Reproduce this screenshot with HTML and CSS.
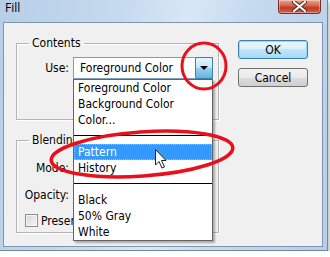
FILE: index.html
```html
<!DOCTYPE html>
<html lang="en">

<head>
  <meta charset="UTF-8">
  <title>Fill</title>
  <link rel="stylesheet" href="styles.css">
</head>

<body>

  <div class="window">

    <!-- Title bar -->
    <div class="titlebar">
      <span class="title">Fill</span>
      <div class="close">
        <svg width="15" height="11" viewBox="0 0 15 11">
          <path d="M2 1 L13 10 M13 1 L2 10" stroke="#4a2a24" stroke-width="4" stroke-linecap="round" />
          <path d="M2 1 L13 10 M13 1 L2 10" stroke="#fff" stroke-width="2.2" stroke-linecap="round" />
        </svg>
      </div>
    </div>

    <!-- Dialog body -->
    <div class="client">
      <div class="left">
        <fieldset class="group">
          <legend>Contents</legend>
          <div class="group-body contents-body">
            <div class="row">
              <label class="row-label">Use:</label>
              <div class="select">
                <span class="select-text">Foreground Color</span>
                <span class="select-btn"><span class="arrow"></span></span>
              </div>
            </div>
          </div>
        </fieldset>

        <fieldset class="group blending">
          <legend><span class="clip legend-clip">Blending</span></legend>
          <div class="group-body blending-body">
            <div class="row">
              <label class="row-label">Mode:</label>
              <div class="select small"></div>
            </div>
            <div class="row opacity-row">
              <label class="row-label">Opacity:</label>
              <div class="select tiny"></div>
            </div>
            <div class="check-row">
              <span class="checkbox"></span>
              <span class="clip check-clip">Preserve Transparency</span>
            </div>
          </div>
        </fieldset>
      </div>

      <div class="buttons">
        <button class="btn btn-default">OK</button>
        <button class="btn">Cancel</button>
      </div>
    </div>

    <!-- Open dropdown list -->
    <ul class="dropdown">
      <li>Foreground Color</li>
      <li>Background Color</li>
      <li>Color...</li>
      <li class="sep"></li>
      <li class="selected">Pattern</li>
      <li>History</li>
      <li class="sep"></li>
      <li>Black</li>
      <li>50% Gray</li>
      <li>White</li>
    </ul>

    <!-- Red annotations and mouse pointer -->
    <svg class="overlay" width="330" height="257" viewBox="0 0 330 257">
      <ellipse cx="204" cy="66" rx="22" ry="23" fill="none" stroke="#e8101c" stroke-width="3" />
      <ellipse cx="142" cy="154" rx="91" ry="22" fill="none" stroke="#e8101c" stroke-width="3.5"
        transform="rotate(-4 142 154)" />
      <path d="M155.5 149.5 L155.5 165 L159 161.5 L162 168 L164.5 167 L161.5 160.5 L166 160.5 Z"
        fill="#fff" stroke="#222" stroke-width="1" stroke-linejoin="round" />
    </svg>

  </div>

</body>

</html>
```

FILE: styles.css
```css
/* Basic Reset */
* {
  margin: 0;
  padding: 0;
  box-sizing: border-box;
}

body {
  background: #fff;
  font-family: "DejaVu Sans Condensed", "DejaVu Sans", sans-serif;
  font-size: 12px;
  color: #000;
}

/* Window frame */
.window {
  position: relative;
  width: 328px;
  height: 251px;
  background: linear-gradient(100deg, #b6cee7 0%, #c7dbef 35%, #d9e7f5 52%, #c6daee 68%, #b8cfe8 100%);
  border-right: 1px solid #6f8aa6;
  border-bottom: 1px solid #6f8aa6;
  box-shadow: 1px 2px 5px rgba(0, 0, 0, 0.35);
}

.titlebar {
  height: 22px;
  display: flex;
  justify-content: space-between;
  align-items: flex-start;
  padding: 0 6px 0 5px;
}

.title {
  font-family: "Open Sans", sans-serif;
  font-size: 12px;
  line-height: 16px;
}

.close {
  width: 43px;
  height: 14px;
  display: flex;
  align-items: center;
  justify-content: center;
  border: 1px solid #7a2f24;
  border-top: none;
  border-radius: 0 0 4px 4px;
  background: linear-gradient(#eba48c 0%, #d86a52 40%, #c33a24 60%, #d0624a 100%);
  box-shadow: inset 0 0 0 1px rgba(255, 255, 255, 0.35);
}

/* Client area */
.client {
  display: flex;
  width: 320px;
  height: 225px;
  margin-left: 3px;
  padding: 13px 0 0 12px;
  background: #f0f0f0;
  border: 1px solid #7d95ae;
}

.left {
  width: 204px;
}

/* Group boxes */
.group {
  width: 203px;
  border: 1px solid #b3b3b3;
  box-shadow: 1px 1px 0 #fff, inset 1px 1px 0 #fff;
}

.group legend {
  margin-left: 12px;
  padding: 0 3px;
  line-height: 14px;
}

.clip {
  display: inline-block;
  overflow: hidden;
  white-space: nowrap;
  vertical-align: top;
}

.legend-clip {
  max-width: 41px;
}

.contents-body {
  padding: 7px 0 40px;
}

.blending {
  margin-top: 13px;
}

.blending-body {
  padding: 10px 0 5px;
}

.row {
  display: flex;
  align-items: center;
  height: 22px;
}

.opacity-row {
  margin-top: 5px;
}

.row-label {
  width: 52px;
  margin-right: 4px;
  text-align: right;
}

.select {
  display: flex;
  align-items: center;
  width: 140px;
  height: 22px;
  background: #fff;
  border: 1px solid #7f9db9;
}

.select.small {
  width: 125px;
}

.select.tiny {
  width: 60px;
}

.select-text {
  flex: 1;
  padding-left: 6px;
}

.select-btn {
  align-self: stretch;
  width: 18px;
  margin: -1px -1px -1px 0;
  display: flex;
  align-items: center;
  justify-content: center;
  border: 1px solid #3c7fb1;
  border-radius: 2px;
  background: linear-gradient(#e5f4fc 0%, #c4e5f6 50%, #98d1ef 50%, #68b3db 100%);
}

.arrow {
  width: 0;
  height: 0;
  border-left: 4px solid transparent;
  border-right: 4px solid transparent;
  border-top: 4px solid #000;
}

.check-row {
  display: flex;
  align-items: center;
  gap: 3px;
  height: 13px;
  margin-top: 8px;
  padding-left: 8px;
}

.check-clip {
  width: 32px;
  line-height: 14px;
}

.checkbox {
  width: 13px;
  height: 13px;
  border: 1px solid #8e8f8f;
  background: linear-gradient(135deg, #d6d6d6, #f6f6f6);
  box-shadow: inset 0 0 0 1px #f4f4f4;
}

/* Buttons */
.buttons {
  display: flex;
  flex-direction: column;
  gap: 9px;
  margin: 4px 0 0 18px;
}

.btn {
  width: 70px;
  height: 19px;
  font-family: inherit;
  font-size: 12px;
  color: #000;
  border: 1px solid #707070;
  border-radius: 3px;
  background: linear-gradient(#f2f2f2 0%, #ebebeb 50%, #dddddd 50%, #cfcfcf 100%);
}

.btn-default {
  border-color: #3c7fb1;
  background: linear-gradient(#eaf6fd 0%, #d9f0fc 50%, #bee6fd 50%, #a7d9f5 100%);
  box-shadow: inset 0 0 0 1px #8fdcff;
}

/* Open dropdown list */
.dropdown {
  position: absolute;
  left: 73px;
  top: 79px;
  width: 140px;
  height: 162px;
  list-style: none;
  background: #fff;
  border: 1px solid #646464;
  box-shadow: 2px 2px 2px rgba(0, 0, 0, 0.3);
}

.dropdown li {
  height: 16px;
  line-height: 16px;
  padding-left: 4px;
}

.dropdown li.sep {
  position: relative;
}

.dropdown li.sep::after {
  content: "";
  position: absolute;
  left: 0;
  right: 0;
  top: 7px;
  border-top: 1px solid #000;
}

.dropdown li.selected {
  background: #3399ff;
  color: #fff;
  outline: 1px dotted #e3b070;
  outline-offset: -1px;
}

/* Annotations */
.overlay {
  position: absolute;
  left: 0;
  top: 0;
  pointer-events: none;
}
```
